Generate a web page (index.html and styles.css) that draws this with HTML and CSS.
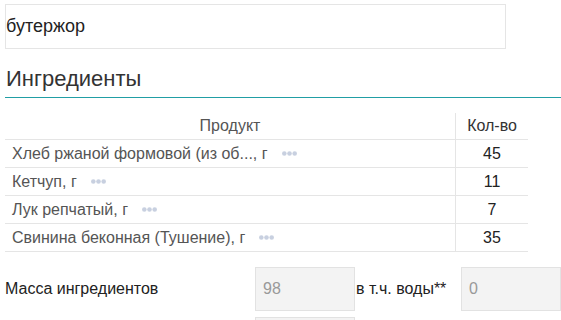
FILE: index.html
```html
<!DOCTYPE html>
<html lang="ru">
<head>
<meta charset="utf-8">
<link rel="stylesheet" href="styles.css">
</head>
<body>
<div class="page">
  <div class="name-input">бутержор</div>
  <h2 class="section-title">Ингредиенты</h2>
  <table class="ingredients">
    <thead>
      <tr><th class="col-product">Продукт</th><th class="col-qty">Кол-во</th></tr>
    </thead>
    <tbody>
      <tr><td class="col-product">Хлеб ржаной формовой (из об..., г<svg class="more" width="15" height="5" viewBox="0 0 15 5"><circle cx="2.3" cy="2.5" r="2.3"/><circle cx="7.5" cy="2.5" r="2.3"/><circle cx="12.7" cy="2.5" r="2.3"/></svg></td><td class="col-qty">45</td></tr>
      <tr><td class="col-product">Кетчуп, г<svg class="more" width="15" height="5" viewBox="0 0 15 5"><circle cx="2.3" cy="2.5" r="2.3"/><circle cx="7.5" cy="2.5" r="2.3"/><circle cx="12.7" cy="2.5" r="2.3"/></svg></td><td class="col-qty">11</td></tr>
      <tr><td class="col-product">Лук репчатый, г<svg class="more" width="15" height="5" viewBox="0 0 15 5"><circle cx="2.3" cy="2.5" r="2.3"/><circle cx="7.5" cy="2.5" r="2.3"/><circle cx="12.7" cy="2.5" r="2.3"/></svg></td><td class="col-qty">7</td></tr>
      <tr><td class="col-product">Свинина беконная (Тушение), г<svg class="more" width="15" height="5" viewBox="0 0 15 5"><circle cx="2.3" cy="2.5" r="2.3"/><circle cx="7.5" cy="2.5" r="2.3"/><circle cx="12.7" cy="2.5" r="2.3"/></svg></td><td class="col-qty">35</td></tr>
    </tbody>
  </table>
  <div class="form-row">
    <div class="form-label">Масса ингредиентов</div>
    <div class="readonly-box">98</div>
    <div class="form-label2">в т.ч. воды**</div>
    <div class="readonly-box">0</div>
  </div>
  <div class="form-row">
    <div class="form-label"></div>
    <div class="readonly-box"></div>
  </div>
</div>
</body>
</html>
```
FILE: styles.css
```css
html, body {
  margin: 0;
  padding: 0;
  background: #fff;
}
body {
  font-family: "Liberation Sans", Arial, sans-serif;
  color: #222;
  overflow: hidden;
}
.page {
  padding: 4px 0 0 5px;
}
.name-input {
  box-sizing: border-box;
  width: 501px;
  height: 45px;
  border: 1px solid #e5e5e5;
  font-size: 18px;
  line-height: 43px;
  padding-left: 0;
  color: #222;
}
.section-title {
  margin: 15px 0 0 0;
  padding: 0 0 3px 1px;
  font-family: "Liberation Sans", Arial, sans-serif;
  font-weight: normal;
  font-size: 22px;
  line-height: 30px;
  color: #333;
  border-bottom: 1px solid #219ea5;
}
.ingredients {
  margin-top: 15px;
  border-collapse: collapse;
  width: 523px;
  font-size: 16px;
}
.ingredients th,
.ingredients td {
  padding: 0;
  border-bottom: 1px solid #e5e5e5;
  font-weight: normal;
}
.ingredients th {
  height: 26px;
  color: #555;
}
.ingredients td {
  height: 27px;
}
.ingredients th.col-product {
  text-align: center;
}
.ingredients td.col-product {
  text-align: left;
  padding-left: 7px;
  color: #555;
}
.ingredients .col-qty {
  width: 72px;
  text-align: center;
  border-left: 1px solid #e5e5e5;
  color: #222;
}
.ingredients th.col-qty {
  color: #333;
}
.more {
  margin-left: 14px;
  vertical-align: 3px;
  fill: #c8d0e0;
}
.form-row {
  display: flex;
  align-items: center;
  margin-top: 15px;
  font-size: 16px;
}
.form-row + .form-row {
  margin-top: 6px;
}
.form-label {
  width: 250px;
  color: #222;
}
.form-label2 {
  width: 106px;
  padding-left: 1px;
  box-sizing: border-box;
  color: #222;
}
.readonly-box {
  box-sizing: border-box;
  width: 100px;
  height: 44px;
  line-height: 42px;
  padding-left: 7px;
  background: #f3f3f3;
  border: 1px solid #e2e2e2;
  color: #999;
}
```
